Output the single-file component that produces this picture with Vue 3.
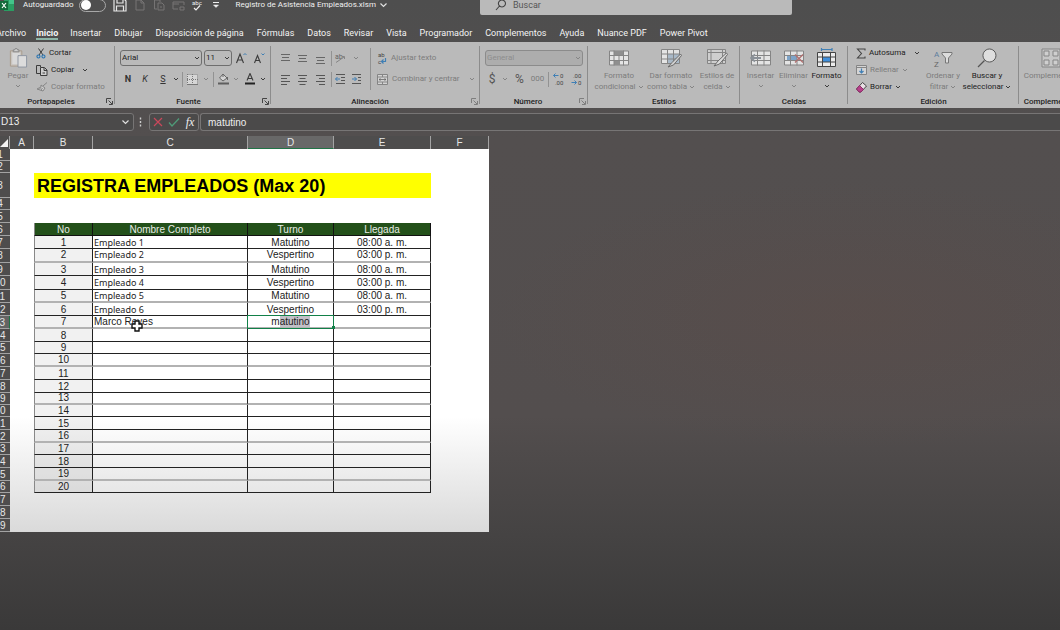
<script setup>
import { h, ref } from 'vue'

const DK = '#3c3c3c'
const GR = '#858585'
const BL = '#3f7fb5'
const WH = '#e4e4e4'

// Each shape is [path, stroke, fill, strokeWidth, dashes]; text is { t, x, y, s, f }
const icons = {
  excel: [14, 14, [['M4 0H14V13H4Z', 'none', '#2a9d62'], ['M9 0H14V6H9Z', 'none', '#43c48a'], ['M0 3H8V12H0Z', 'none', '#126b3b'], ['M2 5L6 10M6 5L2 10', '#fff', 'none', 1.2]]],
  save: [14, 14, [['M1 1H11L13 3V13H1Z', '#e6e6e6', 'none', 1.2], ['M4 1V5H10V1M3.500 13V8H10.500V13', '#e6e6e6', 'none', 1.2]]],
  page: [12, 14, [['M2 2H7L10 5V12H2ZM7 2V5H10', '#767474', 'none']]],
  pages: [12, 14, [['M4 11H1.500V2H7V4M5 5H9L11 7V12H5ZM7 9H9', '#767474', 'none']]],
  mail: [13, 14, [['M1 4H12V7M1 4V11H6M1 6H7M8 9H12V12H8Z', '#767474', 'none']]],
  spell: [14, 14, [{ t: 'abc', x: 2, y: 7, s: 6, f: '#eee' }, ['M4 10L6 12L10 7.500', '#eee', 'none', 1.2]]],
  more: [8, 8, [['M1 1.500H7', '#eee', 'none'], ['M1.500 4L4 6.500L6.500 4Z', '#eee', '#eee', 0.5]]],
  chevW: [9, 6, [['M1.500 1.500L4.500 4.500L7.500 1.500', '#e0e0e0', 'none', 1.2]]],
  chev: [6, 4, [['M1 1L3 3L5 1', DK, 'none']]],
  chevG: [6, 4, [['M1 1L3 3L5 1', GR, 'none']]],
  search: [12, 12, [['M7 1A3.500 3.500 0 1 1 6.900 1ZM4.500 7L1 11', '#444', 'none', 1.1]]],
  paste: [20, 21, [['M2 3H14V19H2Z', '#a99b8b', '#c9c5c0'], ['M4 5H12V17H4Z', 'none', '#d9d9d9'], ['M5 4V2H6.500A1.500 1.500 0 0 1 9.500 2H11V4Z', GR, '#cfcfcf'], ['M10 8H19V20H10Z', '#8d95a0', '#dcdcdc']]],
  cut: [10, 11, [['M2.500 0.500L7 7M7.500 0.500L3 7', DK, 'none'], ['M2.500 7A1.500 1.500 0 1 1 2.400 7ZM7.500 7A1.500 1.500 0 1 1 7.400 7Z', '#2f78b4', 'none', 1.2]]],
  copy: [12, 11, [['M4 8.500H0.500V0.500H4.500V2', DK, 'none'], ['M4.500 2.500H8.500L11 5V10.500H4.500ZM8 3V5.500H11M6.500 8H9', DK, '#cfcfcf']]],
  brush: [12, 10, [['M11 0.500L7 4M5 3L9 6L7 9L1 7L5 5ZM3 7.500L5 5.500M5 8L6.500 6', GR, '#cccccc']]],
  grow: [12, 12, [['M1.500 11L5 2L8.500 11M2.800 8H7.200', DK, 'none', 1.1], ['M8.500 3L10 1.500L11.500 3', BL, 'none']]],
  shrink: [12, 12, [['M1.500 11L4.500 3.500L7.500 11M2.800 8.500H6.200', DK, 'none', 1.1], ['M8.500 1.500L10 3L11.500 1.500', BL, 'none']]],
  borders: [11, 11, [['M0 0H11V10H0Z', 'none', '#d6d6d6'], ['M0.500 0.500H10.500V10M0.500 0V10M5.500 0V10M0 5.500H11', '#777', 'none', 1, '1 1'], ['M0 10.500H11', '#777', 'none']]],
  bucket: [13, 12, [['M6 1L10 5L6 8L2.500 5ZM6 1V4M10.500 4V7', '#666', '#d4d4d4'], ['M1 10.500H12', '#5f5f5f', 'none', 2]]],
  fontA: [12, 12, [['M3 7.500L6 0.500L9 7.500M4.200 5.500H7.800', DK, 'none', 1.1], ['M1 10.500H11', '#222', 'none', 2]]],
  top: [11, 11, [['M1 1.500H10M2 4.500H9M1 7.500H10', '#666', 'none']]],
  mid: [11, 11, [['M1 2.500H10M2 5.500H9M1 8.500H10', '#666', 'none']]],
  bot: [11, 11, [['M1 4.500H10M2 7.500H9M1 10.500H10', '#666', 'none']]],
  left: [11, 11, [['M1 1.500H10M1 4.500H7M1 7.500H10M1 10.500H7', '#555', 'none']]],
  center: [11, 11, [['M1 1.500H10M2.500 4.500H8.500M1 7.500H10M2.500 10.500H8.500', '#555', 'none']]],
  right: [11, 11, [['M1 1.500H10M4 4.500H10M1 7.500H10M4 10.500H10', '#555', 'none']]],
  orient: [12, 12, [{ t: 'ab', x: 1, y: 7, s: 7, f: '#666' }, ['M2 10.500L10 5M8 4.500H10.500V7', GR, 'none']]],
  outdent: [11, 10, [['M1 0.500H10M6 3.500H10M6 6.500H10M1 9.500H10', '#555', 'none'], ['M5 5H0.500M2.500 3L0.500 5L2.500 7', BL, 'none']]],
  indent: [11, 10, [['M1 0.500H10M7 3.500H10M7 6.500H10M1 9.500H10', '#555', 'none'], ['M1 5H5.500M3.500 3L5.500 5L3.500 7', BL, 'none']]],
  wrap: [10, 14, [{ t: 'ab', x: 1, y: 6, s: 6, f: '#444' }, { t: 'c', x: 1, y: 13, s: 6, f: '#444' }, ['M8.500 7V10.500H5M6.500 8.500L4.500 10.500L6.500 12.500', BL, 'none', 1.2]]],
  merge: [11, 11, [['M0.500 0.500H10.500V10.500H0.500ZM0.500 3H10.500M0.500 8H10.500M5.500 0.500V3M5.500 8V10.500', GR, '#d4d4d4'], ['M2 5.500H9M3.500 4.500L2 5.500L3.500 6.500M7.500 4.500L9 5.500L7.500 6.500', '#666', 'none', 0.8]]],
  decUp: [12, 14, [{ t: '0', x: 8, y: 6, s: 6, f: '#444' }, { t: '.00', x: 3, y: 13, s: 6, f: '#444' }, ['M6.500 3.500H1.500M3.500 1.500L1.500 3.500L3.500 5.500', BL, 'none']]],
  decDown: [12, 14, [{ t: '.00', x: 3, y: 6, s: 6, f: '#444' }, { t: '0', x: 8, y: 13, s: 6, f: '#444' }, ['M1.500 10.500H6.500M4.500 8.500L6.500 10.500L4.500 12.500', BL, 'none']]],
  cond: [20, 17, [['M0.500 1.500H19.500V15.500H0.500Z', GR, WH], ['M5 1.500H14V6H5ZM5 11H11V15.500H5Z', 'none', '#8f8f8f'], ['M0 6H20M0 11H20M5 1V16M10 6V11M14.500 1V16', GR, 'none']]],
  asTable: [22, 20, [['M1.500 1.500H19.500V15.500H1.500Z', GR, WH], ['M7.500 6H19V15H7.500Z', 'none', '#a9b9c8'], ['M1 6H20M1 11H20M7.500 1V16M13.500 1V16', GR, 'none'], ['M20.500 6L12 14.500L8 19L13.500 17L21.500 7.500Z', '#6b6b6b', '#cfcfcf']]],
  cellStyle: [22, 20, [['M1.500 1.500H19.500V15.500H1.500Z', GR, '#cfcfcf'], ['M1 4.500H20M1 12.500H20M5 1V16M16.500 1V16', GR, 'none'], ['M20.500 5L12 13L8 18L13.500 16L21.500 6.500Z', '#6b6b6b', '#dcdcdc']]],
  insert: [21, 17, [['M1.500 1.500H20.500V15.500H1.500Z', GR, WH], ['M1 6H21M1 11H21M7.500 1V16M14 1V16', GR, 'none'], ['M11 8.500H1M5 5L1 8.500L5 12', '#8a9097', 'none', 1.8]]],
  remove: [21, 17, [['M1.500 1.500H20.500V15.500H1.500Z', GR, WH], ['M4 6H14V11H4Z', 'none', '#7da3c8'], ['M1 6H21M1 11H21M7.500 1V16M14 1V16', GR, 'none'], ['M12 5L20 13M20 5L12 13', '#b06f6f', 'none', 1.3]]],
  format: [21, 20, [['M5.500 0V3M16 0V3M5.500 1.500H16', BL, 'none', 1.2], ['M1.500 4.500H19.500V18.500H1.500Z', '#444', '#ececec'], ['M6.500 9H14.500V14H6.500Z', 'none', '#3f8fdc'], ['M1 9H20M1 14H20M6.500 4V19M14.500 4V19', '#444', 'none']]],
  sigma: [10, 11, [['M9 2.500V1H1.500L5.500 5.500L1.500 10H9V8.500', '#444', 'none', 1.1]]],
  fill: [11, 10, [['M0.500 0.500H10.500V9.500H0.500ZM0.500 2.500H10.500', GR, '#d4d4d4'], ['M5.500 3.500V8M3.500 6L5.500 8L7.500 6', BL, 'none', 1.2]]],
  erase: [11, 11, [['M6.500 0.500L10.500 4L5 10H3L0.500 7Z', '#444', '#e8dfe4'], ['M3.500 3.500L7.500 7.500L5 10H3L0.500 7Z', '#8c2f68', '#b8418b']]],
  sort: [20, 20, [{ t: 'A', x: 1, y: 9, s: 8, f: '#5a7c9e' }, { t: 'Z', x: 1, y: 19, s: 8, f: '#666' }, ['M9 4.500H19V6L15.500 10V15H12.500V10L9 6Z', '#777', '#dcdcdc']]],
  find: [20, 20, [['M12.500 1A6.500 6.500 0 1 1 12.400 1Z', '#555', '#dedede'], ['M7.500 12.500L1 19', '#555', 'none', 1.3]]],
  addins: [20, 20, [['M1 1H19V19H1Z', GR, '#c6c6c6'], ['M3 3H8V8H3ZM12 3H17V8H12ZM3 12H8V17H3ZM12 12H17V17H12Z', GR, '#cfcfcf']]],
  launch: [7, 7, [['M0.500 5V0.500H5M2.500 2.500L6 6M6.500 3V6.500H3', '#444', 'none']]],
  dots: [3, 10, [['M1.500 0.500V2.500M1.500 4V6M1.500 7.500V9.500', '#ccc', 'none', 1.4]]],
  cancel: [10, 10, [['M1 1L9 9M9 1L1 9', '#c9485b', 'none', 1.2]]],
  accept: [12, 10, [['M1 5.500L4 9L11 1.500', '#4f9b78', 'none', 1.3]]],
  corner: [8, 8, [['M8 0V8H0Z', 'none', '#f2f2f2']]],
  cross: [12, 12, [['M4 1H8V4H11V8H8V11H4V8H1V4H4Z', '#111', '#fff', 1.4]]],
}

const Ico = ({ n }) => {
  const [w, ht, parts] = icons[n]
  return h('svg', { width: w, height: ht, viewBox: `0 0 ${w} ${ht}`, 'aria-hidden': 'true', class: 'ico' },
    parts.map(p => Array.isArray(p)
      ? h('path', { d: p[0], stroke: p[1], fill: p[2], 'stroke-width': p[3] || 1, 'stroke-dasharray': p[4] })
      : h('text', { x: p.x, y: p.y, 'font-size': p.s, fill: p.f }, p.t)))
}
Ico.props = ['n']

const tabs = ['Archivo', 'Inicio', 'Insertar', 'Dibujar', 'Disposición de página', 'Fórmulas', 'Datos', 'Revisar', 'Vista', 'Programador', 'Complementos', 'Ayuda', 'Nuance PDF', 'Power Pivot']
const quick = [['save', 'Guardar'], ['page', 'Nuevo'], ['pages', 'Copiar hoja'], ['mail', 'Enviar'], ['spell', 'Ortografía'], ['more', 'Personalizar']]

const autosave = ref(false)
const formula = ref('matutino')
const cellName = ref('D13')

const heights = [12, 12, 25, 12, 13, 13, 13, 14, 13, 14, 13, 13, 13, 13, 12, 13, 13, 13, 12, 12, 13, 13, 12, 13, 13, 12, 13, 13, 13]
const turns = ['Matutino', 'Vespertino']
const hours = ['08:00 a. m.', '03:00 p. m.']
const rows = heights.map((height, i) => {
  const num = i + 1
  const row = { num, height, kind: 'blank' }
  if (num === 3) row.kind = 'title'
  if (num === 6) row.kind = 'head'
  if (num >= 7 && num <= 26) {
    const id = num - 6
    row.kind = 'data'
    row.id = id
    row.name = id < 7 ? `Empleado ${id}` : id === 7 ? 'Marco Reyes' : ''
    row.turn = id < 7 ? turns[(id - 1) % 2] : ''
    row.hour = id < 7 ? hours[(id - 1) % 2] : ''
    row.soft = [2, 5, 7, 10, 13, 16, 19].includes(id)
  }
  return row
})
</script>

<template>
  <div class="app">
    <header class="titlebar">
      <div class="tb-left">
        <Ico n="excel" />
        <label class="auto"><span>Autoguardado</span><input v-model="autosave" type="checkbox"></label>
        <div class="quick">
          <button v-for="q in quick" :key="q[0]" :aria-label="q[1]"><Ico :n="q[0]" /></button>
        </div>
        <button class="doc">Registro de Asistencia Empleados.xlsm <Ico n="chevW" /></button>
      </div>
      <label class="search"><Ico n="search" /><input type="text" placeholder="Buscar" aria-label="Buscar"></label>
    </header>

    <nav class="tabs">
      <button v-for="t in tabs" :key="t" :class="{ on: t === 'Inicio' }">{{ t }}</button>
    </nav>

    <main class="ribbon">
      <section class="group g-clip">
        <div class="body">
          <button class="big off"><Ico n="paste" /><span>Pegar</span><Ico n="chevG" /></button>
          <div class="stack">
            <button><Ico n="cut" />Cortar</button>
            <button><Ico n="copy" />Copiar <Ico n="chev" class="far" /></button>
            <button class="off"><Ico n="brush" />Copiar formato</button>
          </div>
        </div>
        <footer>Portapapeles<button aria-label="Opciones del portapapeles"><Ico n="launch" /></button></footer>
      </section>

      <section class="group g-font">
        <div class="body lines">
          <div class="line">
            <div class="combo w-font"><select aria-label="Fuente"><option>Arial</option></select><Ico n="chev" /></div>
            <div class="combo w-size"><select aria-label="Tamaño"><option>11</option></select><Ico n="chev" /></div>
            <button class="slot" aria-label="Aumentar tamaño"><Ico n="grow" /></button>
            <button class="slot" aria-label="Reducir tamaño"><Ico n="shrink" /></button>
          </div>
          <div class="line tools-font">
            <button class="glyph"><b>N</b></button>
            <button class="glyph"><i>K</i></button>
            <button class="glyph"><u>S</u></button>
            <button aria-label="Más subrayados"><Ico n="chev" /></button>
            <hr>
            <button aria-label="Bordes"><Ico n="borders" /></button>
            <button aria-label="Más bordes"><Ico n="chevG" /></button>
            <hr>
            <button aria-label="Relleno"><Ico n="bucket" /></button>
            <button aria-label="Más rellenos"><Ico n="chevG" /></button>
            <button aria-label="Color de fuente"><Ico n="fontA" /></button>
            <button aria-label="Más colores"><Ico n="chev" /></button>
          </div>
        </div>
        <footer>Fuente<button aria-label="Opciones de fuente"><Ico n="launch" /></button></footer>
      </section>

      <section class="group g-align">
        <div class="body">
          <div class="lines">
            <div class="line tools-align">
              <button aria-label="Alinear arriba"><Ico n="top" /></button>
              <button aria-label="Alinear al medio"><Ico n="mid" /></button>
              <button aria-label="Alinear abajo"><Ico n="bot" /></button>
              <hr>
              <button aria-label="Orientación"><Ico n="orient" /></button>
              <button aria-label="Más orientaciones"><Ico n="chevG" /></button>
            </div>
            <div class="line tools-align">
              <button aria-label="Izquierda"><Ico n="left" /></button>
              <button aria-label="Centro"><Ico n="center" /></button>
              <button aria-label="Derecha"><Ico n="right" /></button>
              <hr>
              <button aria-label="Disminuir sangría"><Ico n="outdent" /></button>
              <button aria-label="Aumentar sangría"><Ico n="indent" /></button>
            </div>
          </div>
          <hr class="tall">
          <div class="lines">
            <div class="line"><button class="off withText"><Ico n="wrap" />Ajustar texto</button></div>
            <div class="line"><button class="off withText"><Ico n="merge" />Combinar y centrar <Ico n="chevG" class="far" /></button></div>
          </div>
        </div>
        <footer>Alineación<button class="dim" aria-label="Opciones de alineación"><Ico n="launch" /></button></footer>
      </section>

      <section class="group g-num">
        <div class="body lines">
          <div class="line"><div class="combo w-num"><select disabled aria-label="Formato de número"><option>General</option></select><Ico n="chevG" /></div></div>
          <div class="line tools-num">
            <button class="sym">$</button>
            <button aria-label="Más monedas"><Ico n="chevG" /></button>
            <button class="sym">%</button>
            <button class="off">000</button>
            <hr>
            <button aria-label="Aumentar decimales"><Ico n="decUp" /></button>
            <button aria-label="Disminuir decimales"><Ico n="decDown" /></button>
          </div>
        </div>
        <footer>Número<button class="dim" aria-label="Opciones de número"><Ico n="launch" /></button></footer>
      </section>

      <section class="group g-style">
        <div class="body">
          <button class="big off"><Ico n="cond" /><span>Formato<br>condicional <Ico n="chevG" /></span></button>
          <button class="big off"><Ico n="asTable" /><span>Dar formato<br>como tabla <Ico n="chevG" /></span></button>
          <button class="big off"><Ico n="cellStyle" /><span>Estilos de<br>celda <Ico n="chevG" /></span></button>
        </div>
        <footer>Estilos</footer>
      </section>

      <section class="group g-cells">
        <div class="body">
          <button class="big off"><Ico n="insert" /><span>Insertar</span><Ico n="chevG" /></button>
          <button class="big off"><Ico n="remove" /><span>Eliminar</span><Ico n="chevG" /></button>
          <button class="big"><Ico n="format" /><span>Formato</span><Ico n="chev" /></button>
        </div>
        <footer>Celdas</footer>
      </section>

      <section class="group g-edit">
        <div class="body">
          <div class="stack">
            <button><Ico n="sigma" />Autosuma <Ico n="chev" class="far" /></button>
            <button class="off"><Ico n="fill" />Rellenar<Ico n="chevG" /></button>
            <button><Ico n="erase" />Borrar<Ico n="chev" /></button>
          </div>
          <button class="big off"><Ico n="sort" /><span>Ordenar y<br>filtrar <Ico n="chevG" /></span></button>
          <button class="big"><Ico n="find" /><span>Buscar y<br>seleccionar <Ico n="chev" /></span></button>
        </div>
        <footer>Edición</footer>
      </section>

      <section class="group g-add">
        <div class="body">
          <button class="big off"><Ico n="addins" /><span>Complementos</span></button>
        </div>
        <footer>Complementos</footer>
      </section>
    </main>

    <div class="fbar">
      <div class="namebox"><input v-model="cellName" type="text" aria-label="Cuadro de nombres"><button aria-label="Lista de nombres"><Ico n="chevW" /></button></div>
      <Ico n="dots" />
      <div class="fbtns">
        <button aria-label="Cancelar"><Ico n="cancel" /></button>
        <button aria-label="Introducir"><Ico n="accept" /></button>
        <button class="fx"><i>fx</i></button>
      </div>
      <input v-model="formula" class="finput" type="text" aria-label="Barra de fórmulas">
    </div>

    <div class="sheet">
      <table>
        <colgroup><col class="c-n"><col class="c-a"><col class="c-b"><col class="c-c"><col class="c-d"><col class="c-e"><col class="c-f"></colgroup>
        <thead>
          <tr>
            <th class="corner"><Ico n="corner" /></th>
            <th v-for="c in 'ABCDEF'" :key="c" scope="col" :class="{ sel: c === 'D' }">{{ c }}</th>
          </tr>
        </thead>
        <tbody>
          <tr v-for="r in rows" :key="r.num" :class="[r.kind, { soft: r.soft }]" :style="{ height: r.height + 'px' }">
            <th scope="row" :class="{ sel: r.num === 13 }">{{ r.num }}</th>
            <td></td>
            <template v-if="r.kind === 'title'">
              <td colspan="4" class="banner">REGISTRA EMPLEADOS (Max 20)</td><td></td>
            </template>
            <template v-else-if="r.kind === 'head'">
              <td>No</td><td>Nombre Completo</td><td>Turno</td><td>Llegada</td><td></td>
            </template>
            <template v-else-if="r.kind === 'data'">
              <td class="id">{{ r.id }}</td>
              <td class="name" :class="{ small: r.id < 7 }">{{ r.name }}<Ico v-if="r.id === 7" n="cross" class="pointer" /></td>
              <td v-if="r.id === 7" class="active">m<mark>atutino</mark></td>
              <td v-else>{{ r.turn }}</td>
              <td>{{ r.hour }}</td>
              <td></td>
            </template>
            <template v-else><td v-for="k in 5" :key="k"></td></template>
          </tr>
        </tbody>
      </table>
    </div>
  </div>
</template>

<style>
body { margin: 0; background: #3b3a3a; }
</style>

<style scoped>
.app {
  min-height: 100vh;
  overflow: hidden;
  font: 8px/10px Roboto, "Open Sans", sans-serif;
  color: #222;
  background:
    radial-gradient(ellipse at 80% 50%, rgba(98, 74, 68, .3), transparent 30%),
    linear-gradient(#4e4e4e 0, #534f4f 22%, #534e4e 66%, #454343 85%, #3a3939 100%);
}
button, input, select { font: inherit; color: inherit; background: none; border: 0; padding: 0; margin: 0; }
button { display: inline-flex; align-items: center; justify-content: center; white-space: nowrap; }
.ico { display: block; flex: none; }

.titlebar { display: flex; height: 22px; margin-top: -6px; color: #f0f0f0; }
.tb-left { width: 480px; flex: none; display: flex; align-items: center; }
.auto { display: flex; align-items: center; gap: 5px; margin-left: 9px; }
.auto input { appearance: none; box-sizing: border-box; width: 27px; height: 13px; border: 1px solid #a8a8a8; border-radius: 7px; display: flex; align-items: center; }
.auto input::before { content: ""; width: 10px; height: 10px; margin-left: 1px; border-radius: 50%; background: #fff; }
.quick { display: grid; grid-template-columns: 20px 20px 19px 19px 19px 19px; margin-left: 4px; }
.doc { gap: 3px; margin-left: 10px; }
.search { box-sizing: border-box; flex: 0 1 312px; height: 21px; padding-left: 15px; display: flex; align-items: center; gap: 6px; background: #bababa; border-radius: 0 0 2px 2px; color: #444; font-size: 9px; }
.search input { flex: 1; min-width: 0; }
.search input::placeholder { color: #555; opacity: 1; }

.tabs { display: flex; gap: 13px; height: 26px; align-items: flex-end; color: #f4f4f4; font-size: 9px; line-height: 14px; }
.tabs button { position: relative; height: 19px; }
.tabs button:first-child { margin-left: -4px; margin-right: -3px; }
.tabs .on { font-weight: bold; margin-right: -1px; }
.tabs .on::after { content: ""; position: absolute; left: 0; right: 0; bottom: 2px; height: 2px; background: #8db5a6; }

.ribbon { display: flex; height: 66px; background: #bababa; overflow: hidden; }
.group { position: relative; flex: none; box-sizing: border-box; display: flex; flex-direction: column; padding-top: 2px; }
.group::after { content: ""; position: absolute; right: 0; top: 4px; bottom: 4px; width: 1px; background: #8c8c8c; }
.body { display: flex; height: 51px; }
.group footer { height: 13px; display: flex; align-items: center; justify-content: center; font-weight: 500; color: #1f1f1f; }
.group footer button { position: absolute; right: 2px; bottom: 3px; }
.group footer .dim { opacity: .5; }
.off { color: #7c7c7c; }
.far { margin-left: 5px; }
.g-clip { width: 115px; }
.g-clip footer { padding-right: 13px; }
.g-font { width: 156px; }
.g-font footer { padding-right: 9px; }
.g-align { width: 209px; }
.g-align footer { padding-right: 11px; }
.g-num { width: 108px; }
.g-num footer { padding-right: 12px; }
.g-style { width: 152px; }
.g-cells { width: 108px; }
.g-edit { width: 171px; }
.g-add { width: 64px; }

.big { flex-direction: column; justify-content: flex-start; line-height: 11px; padding-top: 4px; }
.big > .ico:first-child { height: 20px; margin-bottom: 2px; }
.big > .ico + span { text-align: center; }
.big > span + .ico { margin-top: 3px; }
.big span .ico { display: inline-block; vertical-align: middle; }
.stack { display: flex; flex-direction: column; align-items: flex-start; }
.stack button { height: 17px; gap: 3px; padding-top: 1px; }
.g-clip .big { width: 36px; }
.g-style .body { padding-left: 4px; }
.g-style .big:nth-child(1) { width: 54px; }
.g-style .big:nth-child(2) { width: 50px; }
.g-style .big:nth-child(3) { width: 42px; }
.g-cells .body { padding-left: 4px; }
.g-cells .big { width: 33px; }
.g-edit .stack { width: 70px; padding-left: 8px; }
.g-edit .big:nth-child(2) { width: 34px; }
.g-edit .big:nth-child(3) { width: 54px; }
.g-add .big { width: 64px; }

.lines { display: flex; flex-direction: column; gap: 1px; padding-top: 4px; box-sizing: border-box; }
.line { display: flex; align-items: center; height: 20px; }
hr { width: 1px; height: 15px; margin: 0 auto; border: 0; background: #929292; }
.tall { height: 42px; margin: 4px 0 0; }
.combo { position: relative; height: 16px; box-sizing: border-box; border: 1px solid #6e6e6e; border-radius: 3px; display: flex; align-items: center; }
.combo select { appearance: none; width: 100%; height: 100%; padding-left: 1px; }
.combo select:disabled { opacity: 1; color: #8d8d8d; }
.combo .ico { position: absolute; right: 1px; pointer-events: none; }
.w-font { width: 82px; margin: 0 2px 0 5px; }
.w-size { width: 28px; }
.w-num { width: 98px; margin-left: 5px; background: #adadad; border-color: #8b8b8b; }
.slot { width: 18px; }
.tools-font { display: grid; grid-template-columns: 16px 18px 18px 7px 7px 13px 13px 2px 18px 8px 20px 6px; padding-left: 5px; }
.glyph { font-size: 9px; color: #333; }
.tools-align { display: grid; grid-template-columns: 18px 17px 18px 4px 14px 18px; padding-left: 5px; width: 99px; box-sizing: border-box; }
.withText { gap: 4px; margin-left: 6px; }
.tools-num { display: grid; grid-template-columns: 16px 10px 19px 17px 4px 16px 19px; padding-left: 4px; }
.sym { font-size: 12px; color: #555; }

.fbar { display: flex; align-items: center; gap: 5px; height: 18px; margin-top: 5px; color: #eee; font: 10px/14px "Liberation Sans", Arial, sans-serif; }
.namebox, .fbtns, .finput { box-sizing: border-box; height: 18px; border: 1px solid #777575; border-radius: 3px; background: #4b4a4a; }
.namebox { display: flex; width: 136px; margin-left: -2px; padding: 0 3px 0 2px; }
.namebox input { flex: 1; min-width: 0; }
.fbtns { display: grid; grid-template-columns: 15px 17px 16px; width: 50px; margin-left: 2px; }
.fx { font: 12px/14px "Liberation Serif", serif; }
.finput { flex: 1; min-width: 0; margin-left: -4px; padding-left: 7px; border-right: 0; border-radius: 3px 0 0 3px; }

.sheet { margin-top: 5px; overflow: hidden; }
table { table-layout: fixed; width: 499px; margin-left: -10px; border-collapse: separate; border-spacing: 0; font: 10px/12px "Liberation Sans", Arial, sans-serif; color: #222; }
.c-n { width: 20px; } .c-a { width: 24px; } .c-b { width: 59px; } .c-c { width: 155px; } .c-d { width: 86px; } .c-e { width: 97px; } .c-f { width: 58px; }
thead tr { height: 13px; }
tbody { background: linear-gradient(#fff 70%, #dadada 100%); }
th, td { padding: 0; text-align: center; font-weight: normal; line-height: 11px; white-space: nowrap; box-sizing: border-box; }
th { color: #e6e6e6; background: #4e4d4d; border: 0 solid #a3a3a3; }
thead th { border-right-width: 1px; }
thead .sel { background: #686868; border-bottom: 1px solid #217346; }
.corner .ico { margin-left: 10px; }
tbody th { border-bottom-width: 1px; }
tbody th.sel { border-right: 1px solid #217346; background: #646464; }
.banner { background: #ff0; color: #000; text-align: left; padding-left: 3px; font-size: 18px; font-weight: bold; line-height: 22px; }
.head td:nth-child(n+3):nth-child(-n+6) { background: #23501a; color: #e8ece6; border-right: 1px solid #111; border-bottom: 1px solid #111; }
.data td:nth-child(n+3):nth-child(-n+6) { border-right: 1px solid #222; border-bottom: 1px solid #222; }
.soft td { line-height: 10px; }
.soft td:nth-child(n+3):nth-child(-n+6) { border-bottom: 2px solid #b2b2b2; }
.data td:nth-child(3), .head td:nth-child(3) { border-left: 1px solid #888; }
.data .id { background: rgba(0, 0, 0, .055); }
.data .name { position: relative; text-align: left; padding-left: 1px; }
.data .small { font-family: "Noto Sans", sans-serif; font-size: 9px; }
.data .active { position: relative; z-index: 1; }
.active::before { content: ""; position: absolute; inset: -1px -1px -2px; border: 1px solid #128048; }
.active::after { content: ""; position: absolute; right: -2px; bottom: -2px; width: 3px; height: 3px; background: #128048; }
mark { background: #c3c0c8; color: inherit; }
.pointer { position: absolute; left: 38px; top: 4px; z-index: 2; }
</style>
